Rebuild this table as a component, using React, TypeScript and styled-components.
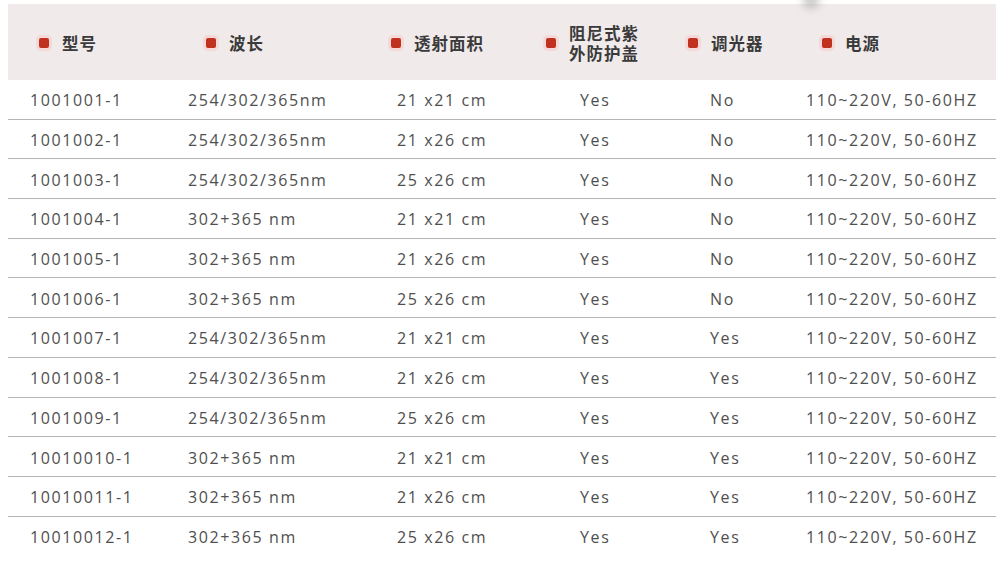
import React from 'react';
import styled, { createGlobalStyle } from 'styled-components';

const GlobalStyle = createGlobalStyle`
    html, body {
        margin: 0;
        padding: 0;
        background: #ffffff;
    }
`;

type Column = {
    title: string[];
    width: number;
    headPad: number;
    cellPad: number;
};

const columns: Column[] = [
    { title: ['型号'], width: 162, headPad: 31, cellPad: 22 },
    { title: ['波长'], width: 200, headPad: 36, cellPad: 18 },
    { title: ['透射面积'], width: 160, headPad: 21, cellPad: 27 },
    { title: ['阻尼式紫', '外防护盖'], width: 140, headPad: 16, cellPad: 50 },
    { title: ['调光器'], width: 120, headPad: 18, cellPad: 40 },
    { title: ['电源'], width: 206, headPad: 32, cellPad: 16 },
];

const rows: string[][] = [
    ['1001001-1', '254/302/365nm', '21 x21 cm', 'Yes', 'No'],
    ['1001002-1', '254/302/365nm', '21 x26 cm', 'Yes', 'No'],
    ['1001003-1', '254/302/365nm', '25 x26 cm', 'Yes', 'No'],
    ['1001004-1', '302+365 nm', '21 x21 cm', 'Yes', 'No'],
    ['1001005-1', '302+365 nm', '21 x26 cm', 'Yes', 'No'],
    ['1001006-1', '302+365 nm', '25 x26 cm', 'Yes', 'No'],
    ['1001007-1', '254/302/365nm', '21 x21 cm', 'Yes', 'Yes'],
    ['1001008-1', '254/302/365nm', '21 x26 cm', 'Yes', 'Yes'],
    ['1001009-1', '254/302/365nm', '25 x26 cm', 'Yes', 'Yes'],
    ['10010010-1', '302+365 nm', '21 x21 cm', 'Yes', 'Yes'],
    ['10010011-1', '302+365 nm', '21 x26 cm', 'Yes', 'Yes'],
    ['10010012-1', '302+365 nm', '25 x26 cm', 'Yes', 'Yes'],
];

const POWER = '110~220V, 50-60HZ';

const gridCols = columns.map((c) => `${c.width}px`).join(' ');

const Page = styled.div`
    position: relative;
    padding: 4px 6px 0 8px;
    width: 988px;
`;

// soft grey blot bleeding in from above the table
const Shadow = styled.div`
    position: absolute;
    left: 798px;
    top: -10px;
    width: 26px;
    height: 22px;
    border-radius: 50%;
    background: radial-gradient(ellipse at center, rgba(120, 120, 120, 0.5), rgba(200, 200, 200, 0) 70%);
    filter: blur(3px);
    pointer-events: none;
`;

const HeadRow = styled.div`
    display: grid;
    grid-template-columns: ${gridCols};
    height: 76px;
    background: #f0eaea;
`;

const HeadCell = styled.div<{ $pad: number }>`
    display: flex;
    align-items: center;
    gap: 13px;
    padding-left: ${(p) => p.$pad}px;
    padding-top: 2px;
    font-family: 'Noto Sans CJK SC', 'Noto Sans', sans-serif;
    font-weight: 700;
    font-size: 16.5px;
    line-height: 20px;
    letter-spacing: 1px;
    color: #3a3a3a;
`;

const Bullet = styled.span`
    flex: none;
    width: 10px;
    height: 10px;
    border-radius: 2px;
    background: #c1311f;
    box-shadow: 0 0 0 3px #f5d9d9;
`;

const HeadText = styled.div`
    display: flex;
    flex-direction: column;
`;

const Row = styled.div<{ $last: boolean }>`
    display: grid;
    grid-template-columns: ${gridCols};
    height: 39.7px;
    box-sizing: border-box;
    border-bottom: 1px solid ${(p) => (p.$last ? 'transparent' : '#b4b4b4')};
`;

const Cell = styled.div<{ $pad: number }>`
    display: flex;
    align-items: center;
    padding-left: ${(p) => p.$pad}px;
    padding-top: 2px;
    font-family: 'Open Sans', 'Liberation Sans', sans-serif;
    font-size: 16px;
    letter-spacing: 1.6px;
    color: #4f4f4f;
    white-space: nowrap;
`;

const App = (): JSX.Element => {
    return (
        <Page>
            <GlobalStyle />
            <HeadRow>
                {columns.map((c) => (
                    <HeadCell key={c.title.join('')} $pad={c.headPad}>
                        <Bullet />
                        <HeadText>
                            {c.title.map((t) => (
                                <span key={t}>{t}</span>
                            ))}
                        </HeadText>
                    </HeadCell>
                ))}
            </HeadRow>
            {rows.map((r, i) => (
                <Row key={r[0]} $last={i === rows.length - 1}>
                    {[...r, POWER].map((v, j) => (
                        <Cell key={j} $pad={columns[j].cellPad}>
                            {v}
                        </Cell>
                    ))}
                </Row>
            ))}
            <Shadow />
        </Page>
    );
};

export default App;
